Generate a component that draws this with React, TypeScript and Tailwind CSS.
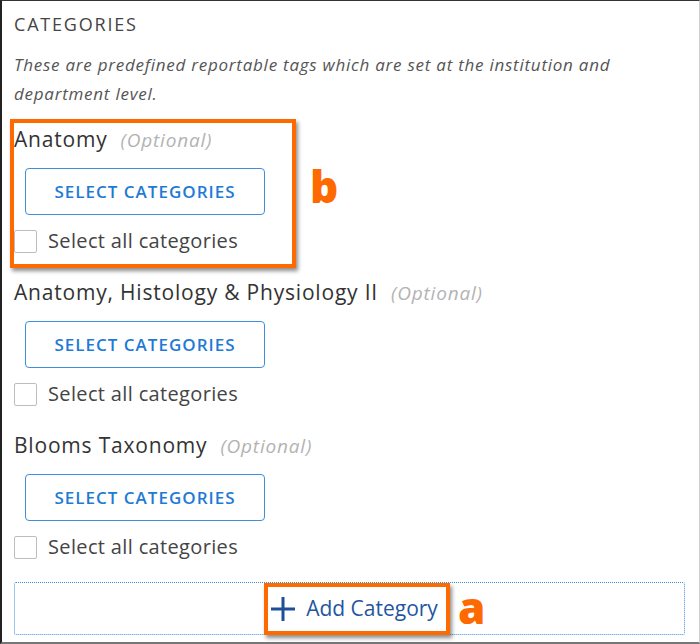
const sections = ["Anatomy", "Anatomy, Histology & Physiology II", "Blooms Taxonomy"];

function CategorySection({ name }: { name: string }) {
  return (
    <div className="flex flex-col items-start">
      <div className="flex items-baseline h-[28px] leading-[28px]">
        <span className="text-[21px] tracking-[0.8px] text-[#333]">{name}</span>
        <span className="ml-[13px] text-[19px] tracking-[0.8px] italic text-[#b3b3b3]">(Optional)</span>
      </div>
      <button className="mt-[15px] ml-[11px] w-[240px] h-[47px] rounded-[4px] border border-[#3d8ee0] text-[17px] font-semibold tracking-[1px] text-[#1f7ad6]">
        SELECT CATEGORIES
      </button>
      <label className="mt-[14px] flex items-center h-[24px]">
        <span className="w-[23px] h-[23px] rounded-[2px] border border-[#bdbdbd] bg-white" />
        <span className="ml-[11px] text-[20px] tracking-[0.35px] text-[#444]">Select all categories</span>
      </label>
    </div>
  );
}

export default function App() {
  return (
    <div
      className="relative w-[700px] h-[644px] overflow-hidden bg-white border-l-2 border-t border-r border-b-2 border-l-[#222] border-t-[#333] border-r-[#cfcfcf] border-b-[#777]"
      style={{ fontFamily: "'Open Sans', sans-serif" }}
    >
      <div className="pl-[12px] pr-[13px] pt-[11px] flex flex-col">
        <h1 className="text-[18px] leading-[24px] tracking-[1.8px] text-[#444]">CATEGORIES</h1>
        <p className="mt-[14px] text-[17px] leading-[29px] tracking-[0.75px] italic text-[#555]">
          These are predefined reportable tags which are set at the institution and
          <br />
          department level.
        </p>
        <div className="mt-[17px] flex flex-col gap-[25px]">
          {sections.map((s) => (
            <CategorySection key={s} name={s} />
          ))}
        </div>
        <div className="mt-[23px] h-[53px] w-[671px] border border-dotted border-[#3d8ee0] rounded-[2px] flex items-center justify-center">
          <span className="ml-[10px] flex items-center gap-[11px] text-[21px] text-[#2456a0]">
            <svg width="24" height="24" viewBox="0 0 24 24" className="text-[#1f4f9a]">
              <path d="M12 0V24M0 12H24" stroke="currentColor" strokeWidth="3" />
            </svg>
            Add Category
          </span>
        </div>
      </div>

      {/* annotation b */}
      <div className="absolute left-[8px] top-[118px] w-[286px] h-[149px] border-[4px] border-[#ff6a00] shadow-[2px_3px_4px_rgba(0,0,0,0.45)]" />
      <span className="absolute left-[308px] top-[160px] text-[44px] font-black text-[#ff6a00] leading-[50px]">b</span>

      {/* annotation a */}
      <div className="absolute left-[262px] top-[582px] w-[186px] h-[52px] border-[4px] border-[#ff6a00] shadow-[2px_3px_4px_rgba(0,0,0,0.45)]" />
      <span className="absolute left-[456px] top-[584px] text-[44px] font-black text-[#ff6a00] leading-[44px]">a</span>
    </div>
  );
}
